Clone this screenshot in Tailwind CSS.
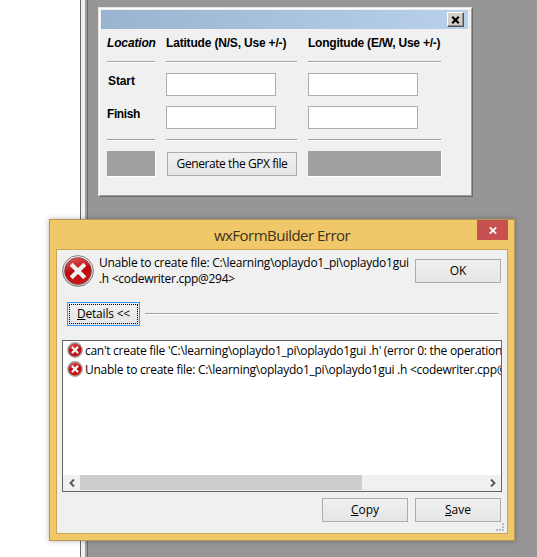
<!DOCTYPE html>
<html lang="en">
<head>
<meta charset="utf-8">
<title>wxFormBuilder Error</title>
<script src="https://cdn.jsdelivr.net/npm/@tailwindcss/browser@4"></script>
</head>
<body class="relative flex h-[557px] w-[537px] overflow-hidden bg-white font-['Open_Sans',sans-serif] text-[12px] text-black">
<svg class="absolute h-0 w-0">
  <defs>
    <linearGradient id="red" x1="0" y1="0" x2="0.3" y2="1"><stop offset="0" stop-color="#dd6264"/><stop offset="0.4" stop-color="#c8282c"/><stop offset="0.55" stop-color="#b80a0e"/><stop offset="1" stop-color="#cc1418"/></linearGradient>
    <linearGradient id="rim" x1="0" y1="0" x2="0" y2="1"><stop offset="0" stop-color="#f4f4f4"/><stop offset="1" stop-color="#c4c4c4"/></linearGradient>
    <symbol id="err" viewBox="0 0 32 32">
      <circle cx="16" cy="16" r="15.4" fill="url(#rim)" stroke="#808080" stroke-width="1"/>
      <circle cx="16" cy="16" r="13.4" fill="url(#red)" stroke="#8a4345" stroke-width=".7"/>
      <path d="M10.7 10.7L21.3 21.3M21.3 10.7L10.7 21.3" stroke="#f0f0f0" stroke-width="4.2" stroke-linecap="square"/>
    </symbol>
    <symbol id="errs" viewBox="0 0 16 16">
      <circle cx="8" cy="8" r="7.2" fill="url(#red)" stroke="#a8a0a0" stroke-width="1.5"/>
      <path d="M5.7 5.7L10.3 10.3M10.3 5.7L5.7 10.3" stroke="#f4f0f0" stroke-width="2.3" stroke-linecap="square"/>
    </symbol>
  </defs>
</svg>
<div class="w-20 shrink-0"></div>
<div class="w-px shrink-0 bg-[#696969]"></div>
<div class="w-1 shrink-0 bg-[#f0f0f0]"></div>
<div class="w-0.5 shrink-0 bg-[#a0a0a0]"></div>
<div class="w-px shrink-0 bg-[#696969]"></div>
<div class="grow bg-[#969696]"></div>

<!-- designer preview window -->
<section class="absolute left-[98px] top-[7px] h-[190px] w-[375px] border border-t-[#e3e3e3] border-l-[#e3e3e3] border-r-[#696969] border-b-[#696969]">
  <div class="h-full border border-t-white border-l-white border-r-[#a0a0a0] border-b-[#a0a0a0] bg-[#f0f0f0] pl-px pt-px font-['Liberation_Sans',sans-serif] text-[12px] leading-[14px] font-bold">
    <div class="flex h-[19px] w-[367px] justify-end bg-gradient-to-r from-[#99b4d1] to-[#b9d1ea] pt-[2px] pr-1">
      <button class="flex h-[15px] w-[17px] items-center justify-center border border-t-white border-l-white border-r-[#505050] border-b-[#505050] bg-[#d4d0c8] shadow-[inset_-1px_-1px_0_#909090]">
        <svg width="9" height="8" viewBox="0 0 9 8" fill="none"><path d="M1.2 .8L7.8 7.2M7.8 .8L1.2 7.2" stroke="#000" stroke-width="2.2"/></svg>
      </button>
    </div>
    <div class="ml-[6px] grid grid-cols-[48px_131px_133px] gap-x-[11px]">
      <div class="h-8 pt-[7px] whitespace-nowrap italic tracking-[-0.15px]">Location</div>
      <div class="pt-[7px] whitespace-nowrap tracking-[-0.18px]">Latitude (N/S, Use +/-)</div>
      <div class="pt-[7px] whitespace-nowrap tracking-[-0.22px]">Longitude (E/W, Use +/-)</div>
      <div class="h-0.5 border-b border-white bg-[#a0a0a0]"></div><div class="h-0.5 border-b border-white bg-[#a0a0a0]"></div><div class="h-0.5 border-b border-white bg-[#a0a0a0]"></div>
      <div class="h-[43px] pt-[11px] pl-px tracking-[-0.1px]">Start</div>
      <div class="pt-[10px]"><div class="h-[23px] w-[110px] border border-[#abadb3] bg-white"></div></div>
      <div class="pt-[10px]"><div class="h-[23px] w-[110px] border border-[#abadb3] bg-white"></div></div>
      <div class="h-[33px] pt-px tracking-[-0.4px]">Finish</div>
      <div class="h-[23px] w-[110px] border border-[#abadb3] bg-white"></div>
      <div class="h-[23px] w-[110px] border border-[#abadb3] bg-white"></div>
      <div class="h-0.5 border-b border-white bg-[#a0a0a0]"></div><div class="h-0.5 border-b border-white bg-[#a0a0a0]"></div><div class="h-0.5 border-b border-white bg-[#a0a0a0]"></div>
      <div class="mt-[10px] h-[26px] w-[49px] border-r border-b border-white bg-[#a0a0a0]"></div>
      <button class="mt-[11px] ml-px flex h-6 w-[130px] items-center justify-center border border-[#acacac] bg-gradient-to-b from-[#f0f0f0] to-[#e5e5e5] font-['Open_Sans',sans-serif] font-normal whitespace-nowrap"><span class="tracking-[-0.42px]">Generate the GPX file</span></button>
      <div class="mt-[10px] h-[26px] w-[134px] border-r border-b border-white bg-[#a0a0a0]"></div>
    </div>
  </div>
</section>

<!-- error dialog -->
<section class="absolute left-[49px] top-[219px] flex h-[322px] w-[466px] flex-col border border-[#b7974f] bg-[#f0c869] px-[6px] pb-[6px] shadow-[0_0_5px_rgba(0,0,0,.3)]">
  <header class="relative flex h-[29px] shrink-0 items-center justify-center text-[15px] leading-[22px] text-[#3c3219]">
    <h1 class="whitespace-nowrap tracking-[-0.52px]">wxFormBuilder Error</h1>
    <button class="absolute top-0 right-0 flex h-5 w-[31px] items-center justify-center bg-[#c75050]"><svg width="8" height="7" viewBox="0 0 8 7"><path d="M.8 .3L7.2 6.7M7.2 .3L.8 6.7" stroke="#fff" stroke-width="1.7"/></svg></button>
  </header>
  <div class="relative flex grow flex-col border border-[#c8a656] bg-[#f0f0f0]">
    <div class="flex h-[52px] shrink-0 pt-[5px] pl-[5px]">
      <svg class="h-8 w-8 shrink-0"><use href="#err"/></svg>
      <p class="ml-[5px] w-[316px] leading-4 whitespace-nowrap"><span class="tracking-[-0.25px]">Unable to create file: C:\learning\oplaydo1_pi\oplaydo1gui</span><br><span class="tracking-[-0.29px]">.h &lt;codewriter.cpp@294&gt;</span></p>
      <button class="mt-1 flex h-6 w-[86px] shrink-0 items-center justify-center border border-[#acacac] bg-gradient-to-b from-[#f0f0f0] to-[#e5e5e5]">OK</button>
    </div>
    <div class="flex h-6 shrink-0 items-center pl-[10px]">
      <button class="h-6 w-[73px] border border-[#3399ff] bg-gradient-to-b from-[#f0f0f0] to-[#e5e5e5] p-px"><span class="flex h-full items-center justify-center border border-dotted border-black whitespace-nowrap tracking-[-0.2px]"><span><u>D</u>etails &lt;&lt;</span></span></button>
      <div class="ml-[5px] h-0.5 w-[353px] border-b border-white bg-[#a0a0a0]"></div>
    </div>
    <div class="mt-[14px] ml-[5px] flex h-[152px] w-[440px] shrink-0 flex-col overflow-hidden border border-[#646464] bg-white pt-px">
      <div class="flex h-[19px] shrink-0 pl-1 leading-[17px] whitespace-nowrap"><svg class="mr-[2px] h-4 w-4 shrink-0"><use href="#errs"/></svg><span class="tracking-[-0.28px]">can't create file 'C:\learning\oplaydo1_pi\oplaydo1gui .h' (error 0: the operation</span></div>
      <div class="flex h-[19px] shrink-0 pl-1 leading-[17px] whitespace-nowrap"><svg class="mr-[2px] h-4 w-4 shrink-0"><use href="#errs"/></svg><span class="tracking-[-0.26px]">Unable to create file: C:\learning\oplaydo1_pi\oplaydo1gui .h &lt;codewriter.cpp@</span></div>
      <div class="mt-auto flex h-4 shrink-0 items-start bg-[#f0f0f0]">
        <div class="flex h-[15px] w-[17px] items-center justify-center"><svg width="6" height="8" viewBox="0 0 6 8"><path d="M5 .5L1.5 4L5 7.5" fill="none" stroke="#555" stroke-width="1.9"/></svg></div>
        <div class="h-[15px] w-[282px] bg-[#cdcdcd]"></div>
        <div class="ml-auto flex h-[15px] w-[17px] items-center justify-center"><svg width="6" height="8" viewBox="0 0 6 8"><path d="M1 .5L4.5 4L1 7.5" fill="none" stroke="#555" stroke-width="1.9"/></svg></div>
      </div>
    </div>
    <div class="mt-[6px] flex justify-end gap-[7px] pr-[6px]">
      <button class="h-6 w-[86px] border border-[#acacac] bg-gradient-to-b from-[#f0f0f0] to-[#e5e5e5]"><u>C</u>opy</button>
      <button class="h-6 w-[86px] border border-[#acacac] bg-gradient-to-b from-[#f0f0f0] to-[#e5e5e5]"><u>S</u>ave</button>
    </div>
    <svg class="absolute right-[3px] bottom-[2px]" width="8" height="8" viewBox="0 0 8 8" fill="#bcbcbc"><path d="M0 6h2v2H0zM3 6h2v2H3zM6 6h2v2H6zM6 3h2v2H6zM6 0h2v2H6z"/></svg>
  </div>
</section>
</body>
</html>
